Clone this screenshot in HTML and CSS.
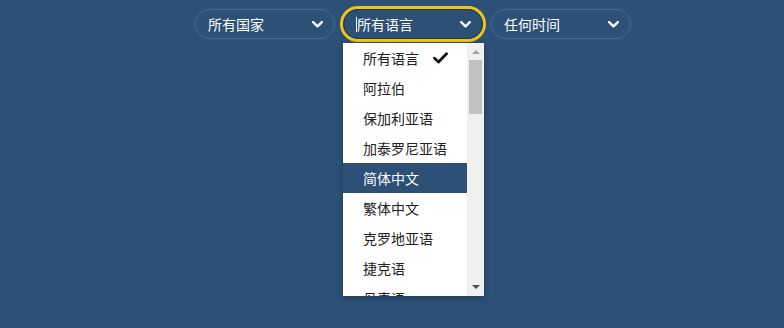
FILE: index.html
```html
<!DOCTYPE html>
<html lang="zh-CN">
<head>
    <meta charset="UTF-8">
    <title>筛选</title>
    <link rel="stylesheet" href="styles.css">
</head>
<body>
    <div class="filters">
        <div class="pill">
            <span class="pill-label">所有国家</span>
            <svg class="chevron" width="11" height="7" viewBox="0 0 11 7"><polyline points="1.2,1.2 5.5,5.3 9.8,1.2" fill="none" stroke="#fff" stroke-width="2.4" stroke-linecap="round" stroke-linejoin="round"/></svg>
        </div>

        <div class="pill pill-open">
            <span class="pill-label"><span class="caret"></span>所有语言</span>
            <svg class="chevron" width="11" height="7" viewBox="0 0 11 7"><polyline points="1.2,1.2 5.5,5.3 9.8,1.2" fill="none" stroke="#fff" stroke-width="2.4" stroke-linecap="round" stroke-linejoin="round"/></svg>

            <div class="dropdown">
                <ul class="options">
                    <li class="option">所有语言
                        <svg class="check" width="15" height="12" viewBox="0 0 15 12"><polyline points="1.5,6.2 5.5,10 13.5,1.8" fill="none" stroke="#111" stroke-width="2.8" stroke-linecap="round" stroke-linejoin="round"/></svg>
                    </li>
                    <li class="option">阿拉伯</li>
                    <li class="option">保加利亚语</li>
                    <li class="option">加泰罗尼亚语</li>
                    <li class="option active">简体中文</li>
                    <li class="option">繁体中文</li>
                    <li class="option">克罗地亚语</li>
                    <li class="option">捷克语</li>
                    <li class="option">丹麦语</li>
                </ul>
                <div class="scrollbar">
                    <span class="arrow arrow-up"></span>
                    <div class="track"><div class="thumb"></div></div>
                    <span class="arrow arrow-down"></span>
                </div>
            </div>
        </div>

        <div class="pill">
            <span class="pill-label">任何时间</span>
            <svg class="chevron" width="11" height="7" viewBox="0 0 11 7"><polyline points="1.2,1.2 5.5,5.3 9.8,1.2" fill="none" stroke="#fff" stroke-width="2.4" stroke-linecap="round" stroke-linejoin="round"/></svg>
        </div>
    </div>
</body>
</html>
```

FILE: styles.css
```css
* {
    margin: 0;
    padding: 0;
    box-sizing: border-box;
}

body {
    background: #2c5076;
    font-family: "Noto Sans CJK SC", "Noto Sans", sans-serif;
    font-size: 14px;
    height: 328px;
    overflow: hidden;
}

.filters {
    display: flex;
    gap: 8px;
    padding: 9px 0 0 195px;
}

.pill {
    position: relative;
    width: 140px;
    height: 30px;
    border: 1px solid #3d6c9c;
    border-radius: 15px;
    display: flex;
    align-items: center;
    justify-content: space-between;
    padding: 0 11px 0 12px;
    color: #fff;
}

.pill-open {
    border-color: #1c3956;
    box-shadow: 0 0 0 3px #f2c512;
}

.pill-label {
    display: flex;
    align-items: center;
    line-height: 1;
}

.caret {
    width: 1px;
    height: 15px;
    background: #fff;
}

.chevron {
    display: block;
}

.dropdown {
    position: absolute;
    top: 33px;
    left: -1px;
    width: 141px;
    height: 253px;
    background: #fff;
    display: flex;
    overflow: hidden;
    box-shadow: 0 2px 6px rgba(0, 0, 0, 0.25);
}

.options {
    list-style: none;
    flex: 1;
    overflow: hidden;
}

.option {
    height: 30px;
    padding-left: 20px;
    display: flex;
    align-items: center;
    color: #222;
    white-space: nowrap;
}

.option.active {
    background: #2c5076;
    color: #fff;
}

.check {
    display: block;
    margin-left: 14px;
}

.scrollbar {
    width: 17px;
    background: #f0f0f0;
    display: flex;
    flex-direction: column;
    align-items: center;
}

.arrow {
    width: 0;
    height: 0;
    border-left: 4px solid transparent;
    border-right: 4px solid transparent;
    margin: 7px 0 6px;
}

.arrow-up {
    border-bottom: 4px solid #a3a3a3;
}

.arrow-down {
    border-top: 4px solid #505050;
    margin: 6px 0 7px;
}

.track {
    flex: 1;
    width: 100%;
    padding: 0 2px;
}

.thumb {
    height: 54px;
    background: #c1c1c1;
}
```
